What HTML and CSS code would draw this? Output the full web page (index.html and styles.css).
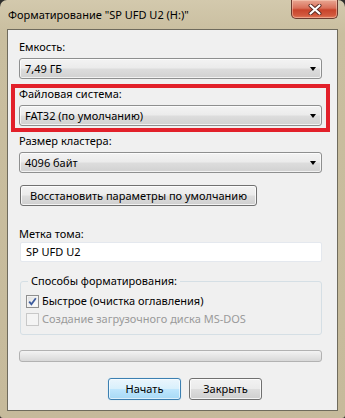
FILE: index.html
```html
<!DOCTYPE html>
<html lang="ru">
<head>
<meta charset="utf-8">
<title>Форматирование</title>
<link rel="stylesheet" href="styles.css">
</head>
<body>
<div class="window">
  <div class="titlebar">
    <span class="title">Форматирование "SP UFD U2 (H:)"</span>
    <div class="close">
      <svg width="14" height="11" viewBox="0 0 14 11">
        <path d="M2.5 1.5 L11.5 9.5 M11.5 1.5 L2.5 9.5" stroke="#5a2a22" stroke-width="4" stroke-linecap="round" fill="none"/>
        <path d="M2.5 1.5 L11.5 9.5 M11.5 1.5 L2.5 9.5" stroke="#ffffff" stroke-width="2.2" stroke-linecap="round" fill="none"/>
      </svg>
    </div>
  </div>
  <div class="content">
    <div class="field">
      <div class="label">Емкость:</div>
      <div class="combo"><span>7,49 ГБ</span><i class="arrow"></i></div>
    </div>
    <div class="field highlight">
      <div class="label">Файловая система:</div>
      <div class="combo"><span>FAT32 (по умолчанию)</span><i class="arrow"></i></div>
    </div>
    <div class="field">
      <div class="label">Размер кластера:</div>
      <div class="combo"><span>4096 байт</span><i class="arrow"></i></div>
    </div>
    <div class="btn restore">Восстановить параметры по умолчанию</div>
    <div class="label vol">Метка тома:</div>
    <div class="input">SP UFD U2</div>
    <fieldset class="group">
      <legend>Способы форматирования:</legend>
      <div class="check">
        <span class="box checked">
          <svg width="9" height="9" viewBox="0 0 9 9"><path d="M1.2 4.6 L3.4 7.2 L7.8 1.2" stroke="#3d5c9e" stroke-width="1.8" fill="none"/></svg>
        </span>
        <span>Быстрое (очистка оглавления)</span>
      </div>
      <div class="check disabled">
        <span class="box"></span>
        <span>Создание загрузочного диска MS-DOS</span>
      </div>
    </fieldset>
    <div class="progress"></div>
    <div class="actions">
      <div class="btn action default">Начать</div>
      <div class="btn action">Закрыть</div>
    </div>
  </div>
</div>
</body>
</html>
```
FILE: styles.css
```css
html, body {
  margin: 0;
  padding: 0;
  background: #2e2e2c;
}
body {
  width: 345px;
  height: 418px;
  overflow: hidden;
  font-family: "Noto Sans", "Liberation Sans", sans-serif;
  font-size: 11px;
  color: #000;
}
.window {
  width: 345px;
  height: 418px;
  box-sizing: border-box;
  background: linear-gradient(180deg, #d3c9ad 0%, #c9be9f 8%, #c6ba9b 100%);
  border-radius: 7px 7px 3px 3px;
  display: flex;
  flex-direction: column;
}
.titlebar {
  height: 29px;
  display: flex;
  justify-content: space-between;
  align-items: flex-start;
  flex: none;
}
.title {
  padding: 7px 0 0 8px;
  line-height: 16px;
  font-size: 11px;
  color: #000;
  white-space: nowrap;
}
.close {
  width: 47px;
  height: 19px;
  box-sizing: border-box;
  margin-right: 7px;
  border: 1px solid #6b3b30;
  border-top: none;
  border-radius: 0 0 5px 5px;
  background: linear-gradient(180deg, #e9a793 0%, #d9705a 45%, #c8442c 55%, #d2593e 85%, #e27b5c 100%);
  display: flex;
  align-items: center;
  justify-content: center;
  box-shadow: inset 0 0 0 1px rgba(255, 220, 200, 0.45);
}
.content {
  flex: 1;
  margin: 0 7px 7px 7px;
  border: 1px solid #6f6b5d;
  background: #f0f0f0;
  padding: 9px 15px 9px 11px;
  display: flex;
  flex-direction: column;
}
.field {
  position: relative;
  display: flex;
  flex-direction: column;
}
.field + .field {
  margin-top: 7px;
}
.label {
  line-height: 16px;
  height: 16px;
  margin-bottom: 3px;
  white-space: nowrap;
}
.highlight::after {
  content: "";
  position: absolute;
  top: -2px;
  left: -8px;
  right: -8px;
  bottom: -6px;
  border: 4px solid #e2202a;
  pointer-events: none;
}
.combo {
  height: 21px;
  box-sizing: border-box;
  border: 1px solid #8e8f8f;
  border-radius: 3px;
  background: linear-gradient(180deg, #f3f3f3 0%, #ebebeb 48%, #dddddd 52%, #d1d1d1 100%);
  box-shadow: inset 0 0 0 1px rgba(255, 255, 255, 0.7);
  display: flex;
  align-items: center;
  justify-content: space-between;
  padding: 0 5px 0 5px;
  line-height: 16px;
  white-space: nowrap;
}
.arrow {
  width: 0;
  height: 0;
  border-left: 3.5px solid transparent;
  border-right: 3.5px solid transparent;
  border-top: 4px solid #000;
  margin-top: 1px;
}
.btn {
  height: 21px;
  box-sizing: border-box;
  border: 1px solid #707070;
  border-radius: 3px;
  background: linear-gradient(180deg, #f2f2f2 0%, #ebebeb 48%, #dddddd 52%, #cfcfcf 100%);
  box-shadow: inset 0 0 0 1px rgba(255, 255, 255, 0.75);
  display: flex;
  align-items: center;
  justify-content: center;
  line-height: 16px;
  white-space: nowrap;
}
.restore {
  width: 237px;
  margin: 12px 0 0 1px;
}
.vol {
  margin: 20px 0 0 0;
}
.input {
  height: 20px;
  box-sizing: border-box;
  background: #fff;
  border: 1px solid #e4e8ee;
  border-radius: 2px;
  padding: 0 5px;
  line-height: 18px;
  margin-left: 1px;
}
.group {
  margin: 11px 0 0 1px;
  padding: 3px 6px 6px 5px;
  border: 1px solid #d5dfe5;
  border-radius: 3px;
  min-width: 0;
}
.group legend {
  padding: 0 3px;
  margin-left: 2px;
  line-height: 16px;
}
.check {
  height: 18px;
  display: flex;
  align-items: center;
  gap: 3px;
  line-height: 16px;
  white-space: nowrap;
}
.box {
  width: 13px;
  height: 13px;
  box-sizing: border-box;
  border: 1px solid #8f8f8f;
  background: linear-gradient(135deg, #dcdcdc 0%, #f4f4f4 60%, #ffffff 100%);
  box-shadow: inset 0 0 0 1px #f4f4f4;
  display: flex;
  align-items: center;
  justify-content: center;
}
.disabled {
  color: #9a9a9a;
}
.disabled .box {
  border-color: #c8c8c8;
  background: #f4f4f4;
  box-shadow: none;
}
.progress {
  margin-top: 15px;
  height: 12px;
  box-sizing: border-box;
  border: 1px solid #b2b2b2;
  border-radius: 3px;
  background: linear-gradient(180deg, #f3f3f3 0%, #e6e6e6 50%, #d8d8d8 100%);
}
.actions {
  margin-top: 16px;
  display: flex;
  gap: 8px;
  padding-left: 89px;
}
.action {
  width: 73px;
  height: 22px;
}
.default {
  border-color: #3c7fb1;
  background: linear-gradient(180deg, #eaf6fd 0%, #d9f0fc 48%, #bee6fd 52%, #a7d9f5 100%);
  box-shadow: inset 0 0 0 1px rgba(255, 255, 255, 0.6), 0 0 1px #8fd0f5;
}
```
